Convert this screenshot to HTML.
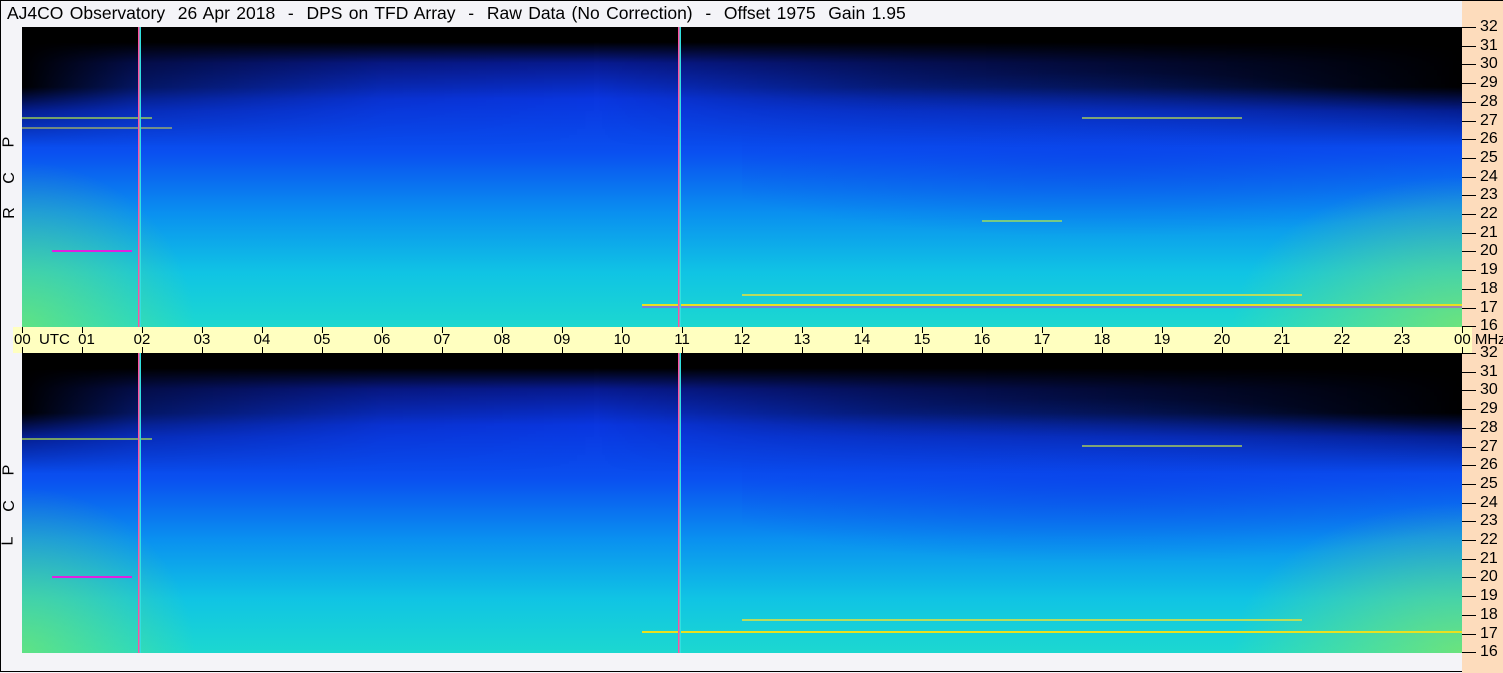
<!DOCTYPE html><html><head><meta charset="utf-8"><style>
*{margin:0;padding:0;box-sizing:border-box}
body{width:1503px;height:672px;background:#f4f4f8;position:relative;overflow:hidden;font-family:"Liberation Sans",sans-serif;border:1px solid #000}
.t{position:absolute;left:6px;top:2px;font-size:17.5px;color:#000;white-space:pre;word-spacing:1.5px}
.axr{position:absolute;left:1461px;top:0;width:41px;height:672px;background:#fddcbc}
.p{position:absolute;left:21px;width:1440px;height:300px;overflow:hidden;
background:
radial-gradient(ellipse 12% 55% at 0% 100%, rgba(150,235,70,.55), rgba(150,235,70,0)),
radial-gradient(ellipse 16% 50% at 100% 100%, rgba(160,235,70,.6), rgba(160,235,70,0)),
linear-gradient(to bottom,#000 0%,#000 5%,#081a90 12%,#0a36e0 24%,#0a50f0 42%,#0a90f0 62%,#10c4e4 82%,#1cd8d0 100%);}
.dk{position:absolute;left:0;top:0;width:100%;height:100%;
background:linear-gradient(to bottom,rgba(0,0,0,1) 0%,rgba(0,0,0,1) 20%,rgba(0,0,60,.5) 28%,rgba(0,0,0,0) 40%);
-webkit-mask:linear-gradient(to right,#000 0%,rgba(0,0,0,.5) 8%,rgba(0,0,0,.1) 25%,rgba(0,0,0,0) 40%,rgba(0,0,0,.4) 60%,#000 100%);}
.rb{position:absolute;left:50%;top:15%;width:50%;height:55%;background:radial-gradient(ellipse 60% 50% at 50% 50%,rgba(10,60,230,.45),rgba(10,60,230,0))}
.v{position:absolute;top:0;height:100%;width:3px}
.h{position:absolute;height:2px}
.mid{position:absolute;left:12px;top:326px;width:1459px;height:26px;background:#ffffc0}
.mid span{position:absolute;top:4px;font-size:15px;white-space:nowrap;transform:translateX(-50%)}
.tk{position:absolute;width:1px;background:#000}
.rn{position:absolute;font-size:16px;left:1479px}
.rt{position:absolute;left:1461px;width:14px;height:1px;background:#000}
.lab{position:absolute;left:3px;font-size:16px;transform:rotate(-90deg)}
</style></head><body>
<div class="t">AJ4CO Observatory  26 Apr 2018  -  DPS on TFD Array  -  Raw Data (No Correction)  -  Offset 1975  Gain 1.95</div>
<div class="axr"></div>
<div class="p" style="top:26px"><div class="dk"></div><div class="rb"></div>
<div class="h" style="left:0;top:90px;width:130px;background:#c0f040;opacity:.6"></div>
<div class="h" style="left:0;top:100px;width:150px;background:#e0e040;opacity:.5"></div>
<div class="h" style="left:30px;top:223px;width:80px;background:#e020e0"></div>
<div class="h" style="left:620px;top:277px;width:820px;background:#e8e020"></div>
<div class="h" style="left:620px;top:279px;width:820px;background:#e030d0;opacity:.5"></div>
<div class="h" style="left:720px;top:267px;width:560px;background:#e0e040;opacity:.8"></div>
<div class="h" style="left:1060px;top:90px;width:160px;background:#d0f040;opacity:.6"></div>
<div class="h" style="left:960px;top:193px;width:80px;background:#c0f040;opacity:.6"></div>
<div class="v" style="left:116px;background:linear-gradient(to right,#ff50a0,#ff50a0 33%,#30e0e0 66%)"></div>
<div class="v" style="left:656px;background:linear-gradient(to right,#ff50a0,#ff50a0 33%,#30e0e0 66%)"></div>
</div>
<div class="mid">
<span style="transform:none;left:1px">00&nbsp; UTC&nbsp; 01</span>
<span style="left:129px">02</span><span style="left:189px">03</span><span style="left:249px">04</span><span style="left:309px">05</span><span style="left:369px">06</span><span style="left:429px">07</span><span style="left:489px">08</span><span style="left:549px">09</span><span style="left:609px">10</span><span style="left:669px">11</span><span style="left:729px">12</span><span style="left:789px">13</span><span style="left:849px">14</span><span style="left:909px">15</span><span style="left:969px">16</span><span style="left:1029px">17</span><span style="left:1089px">18</span><span style="left:1149px">19</span><span style="left:1209px">20</span><span style="left:1269px">21</span><span style="left:1329px">22</span><span style="left:1389px">23</span><span style="left:1441px;transform:none">00 MHz</span>
</div>
<div class="p" style="top:352px"><div class="dk"></div><div class="rb"></div>
<div class="h" style="left:0;top:85px;width:130px;background:#c0f040;opacity:.6"></div>
<div class="h" style="left:30px;top:223px;width:80px;background:#e020e0"></div>
<div class="h" style="left:620px;top:278px;width:820px;background:#e8e020"></div>
<div class="h" style="left:720px;top:266px;width:560px;background:#e0e040;opacity:.8"></div>
<div class="h" style="left:1060px;top:92px;width:160px;background:#d0f040;opacity:.6"></div>
<div class="v" style="left:116px;background:linear-gradient(to right,#ff50a0,#ff50a0 33%,#30e0e0 66%)"></div>
<div class="v" style="left:656px;background:linear-gradient(to right,#ff50a0,#ff50a0 33%,#30e0e0 66%)"></div>
</div>
<div class="lab" style="top:132px">P</div><div class="lab" style="top:168px">C</div><div class="lab" style="top:203px">R</div>
<div class="lab" style="top:460px">P</div><div class="lab" style="top:496px">C</div><div class="lab" style="top:531px">L</div>
<div id="r"></div>
<script>
var r=document.getElementById('r'),h='';
[26,352].forEach(function(b){for(var i=0;i<17;i++){var y=b+Math.round(i*18.7);h+='<div class="rt" style="top:'+y+'px"></div><div class="rn" style="top:'+(y-9)+'px">'+(32-i)+'</div>';}});
for(var k=0;k<=24;k++){var x=21+k*60;h+='<div class="tk" style="left:'+x+'px;top:326px;height:6px"></div><div class="tk" style="left:'+x+'px;top:346px;height:6px"></div>';}
r.innerHTML=h;
</script>
</body></html>
